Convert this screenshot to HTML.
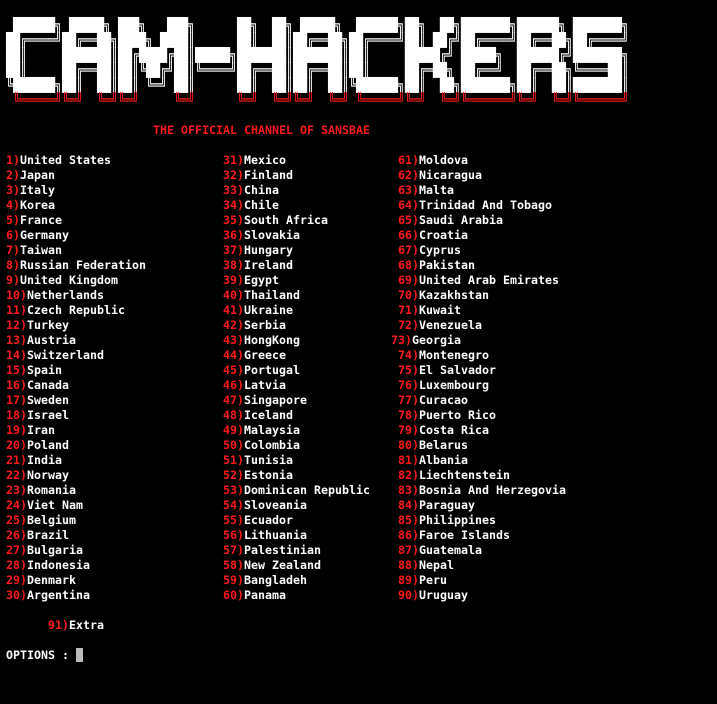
<!DOCTYPE html>
<html><head><meta charset="utf-8"><style>
html,body{margin:0;padding:0;background:#000;width:717px;height:704px;overflow:hidden}
body{position:relative;font-family:"DejaVu Sans Mono","Liberation Mono",monospace;font-weight:bold;font-size:11.63px;line-height:15px;color:#fff}
pre{margin:0;font:inherit;white-space:pre}
.r{color:#ff1a1a}
.ban{position:absolute;left:6px;top:18px;font-weight:normal;color:#fff;line-height:13px;transform:scaleY(1.154);transform-origin:0 0}
.col{position:absolute;top:153px}
.abs{position:absolute}
.cur{display:inline-block;width:7px;height:14px;background:#bbb;vertical-align:-3px}
</style></head><body>
<pre class="ban"> ██████╗ █████╗ ███╗   ███╗      ██╗  ██╗ █████╗  ██████╗██╗  ██╗███████╗██████╗ ███████╗
██╔════╝██╔══██╗████╗ ████║      ██║  ██║██╔══██╗██╔════╝██║ ██╔╝██╔════╝██╔══██╗██╔════╝
██║     ███████║██╔████╔██║█████╗███████║███████║██║     █████╔╝ █████╗  ██████╔╝███████╗
██║     ██╔══██║██║╚██╔╝██║╚════╝██╔══██║██╔══██║██║     ██╔═██╗ ██╔══╝  ██╔══██╗╚════██║
╚██████╗██║  ██║██║ ╚═╝ ██║      ██║  ██║██║  ██║╚██████╗██║  ██╗███████╗██║  ██║███████║
<span class="r"> ╚═════╝╚═╝  ╚═╝╚═╝     ╚═╝      ╚═╝  ╚═╝╚═╝  ╚═╝ ╚═════╝╚═╝  ╚═╝╚══════╝╚═╝  ╚═╝╚══════╝</span></pre>
<pre class="abs r" style="left:153px;top:123px">THE OFFICIAL CHANNEL OF SANSBAE</pre>
<pre class="col" style="left:6px"><span class="r">1)</span>United States
<span class="r">2)</span>Japan
<span class="r">3)</span>Italy
<span class="r">4)</span>Korea
<span class="r">5)</span>France
<span class="r">6)</span>Germany
<span class="r">7)</span>Taiwan
<span class="r">8)</span>Russian Federation
<span class="r">9)</span>United Kingdom
<span class="r">10)</span>Netherlands
<span class="r">11)</span>Czech Republic
<span class="r">12)</span>Turkey
<span class="r">13)</span>Austria
<span class="r">14)</span>Switzerland
<span class="r">15)</span>Spain
<span class="r">16)</span>Canada
<span class="r">17)</span>Sweden
<span class="r">18)</span>Israel
<span class="r">19)</span>Iran
<span class="r">20)</span>Poland
<span class="r">21)</span>India
<span class="r">22)</span>Norway
<span class="r">23)</span>Romania
<span class="r">24)</span>Viet Nam
<span class="r">25)</span>Belgium
<span class="r">26)</span>Brazil
<span class="r">27)</span>Bulgaria
<span class="r">28)</span>Indonesia
<span class="r">29)</span>Denmark
<span class="r">30)</span>Argentina</pre>
<pre class="col" style="left:223px"><span class="r">31)</span>Mexico
<span class="r">32)</span>Finland
<span class="r">33)</span>China
<span class="r">34)</span>Chile
<span class="r">35)</span>South Africa
<span class="r">36)</span>Slovakia
<span class="r">37)</span>Hungary
<span class="r">38)</span>Ireland
<span class="r">39)</span>Egypt
<span class="r">40)</span>Thailand
<span class="r">41)</span>Ukraine
<span class="r">42)</span>Serbia
<span class="r">43)</span>HongKong
<span class="r">44)</span>Greece
<span class="r">45)</span>Portugal
<span class="r">46)</span>Latvia
<span class="r">47)</span>Singapore
<span class="r">48)</span>Iceland
<span class="r">49)</span>Malaysia
<span class="r">50)</span>Colombia
<span class="r">51)</span>Tunisia
<span class="r">52)</span>Estonia
<span class="r">53)</span>Dominican Republic
<span class="r">54)</span>Sloveania
<span class="r">55)</span>Ecuador
<span class="r">56)</span>Lithuania
<span class="r">57)</span>Palestinian
<span class="r">58)</span>New Zealand
<span class="r">59)</span>Bangladeh
<span class="r">60)</span>Panama</pre>
<pre class="col" style="left:398px"><span class="r">61)</span>Moldova
<span class="r">62)</span>Nicaragua
<span class="r">63)</span>Malta
<span class="r">64)</span>Trinidad And Tobago
<span class="r">65)</span>Saudi Arabia
<span class="r">66)</span>Croatia
<span class="r">67)</span>Cyprus
<span class="r">68)</span>Pakistan
<span class="r">69)</span>United Arab Emirates
<span class="r">70)</span>Kazakhstan
<span class="r">71)</span>Kuwait
<span class="r">72)</span>Venezuela
<span style="margin-left:-7px"><span class="r">73)</span>Georgia</span>
<span class="r">74)</span>Montenegro
<span class="r">75)</span>El Salvador
<span class="r">76)</span>Luxembourg
<span class="r">77)</span>Curacao
<span class="r">78)</span>Puerto Rico
<span class="r">79)</span>Costa Rica
<span class="r">80)</span>Belarus
<span class="r">81)</span>Albania
<span class="r">82)</span>Liechtenstein
<span class="r">83)</span>Bosnia And Herzegovia
<span class="r">84)</span>Paraguay
<span class="r">85)</span>Philippines
<span class="r">86)</span>Faroe Islands
<span class="r">87)</span>Guatemala
<span class="r">88)</span>Nepal
<span class="r">89)</span>Peru
<span class="r">90)</span>Uruguay</pre>
<pre class="abs" style="left:48px;top:618px"><span class="r">91)</span>Extra</pre>
<pre class="abs" style="left:6px;top:648px">OPTIONS : <span class="cur"></span></pre>
</body></html>
